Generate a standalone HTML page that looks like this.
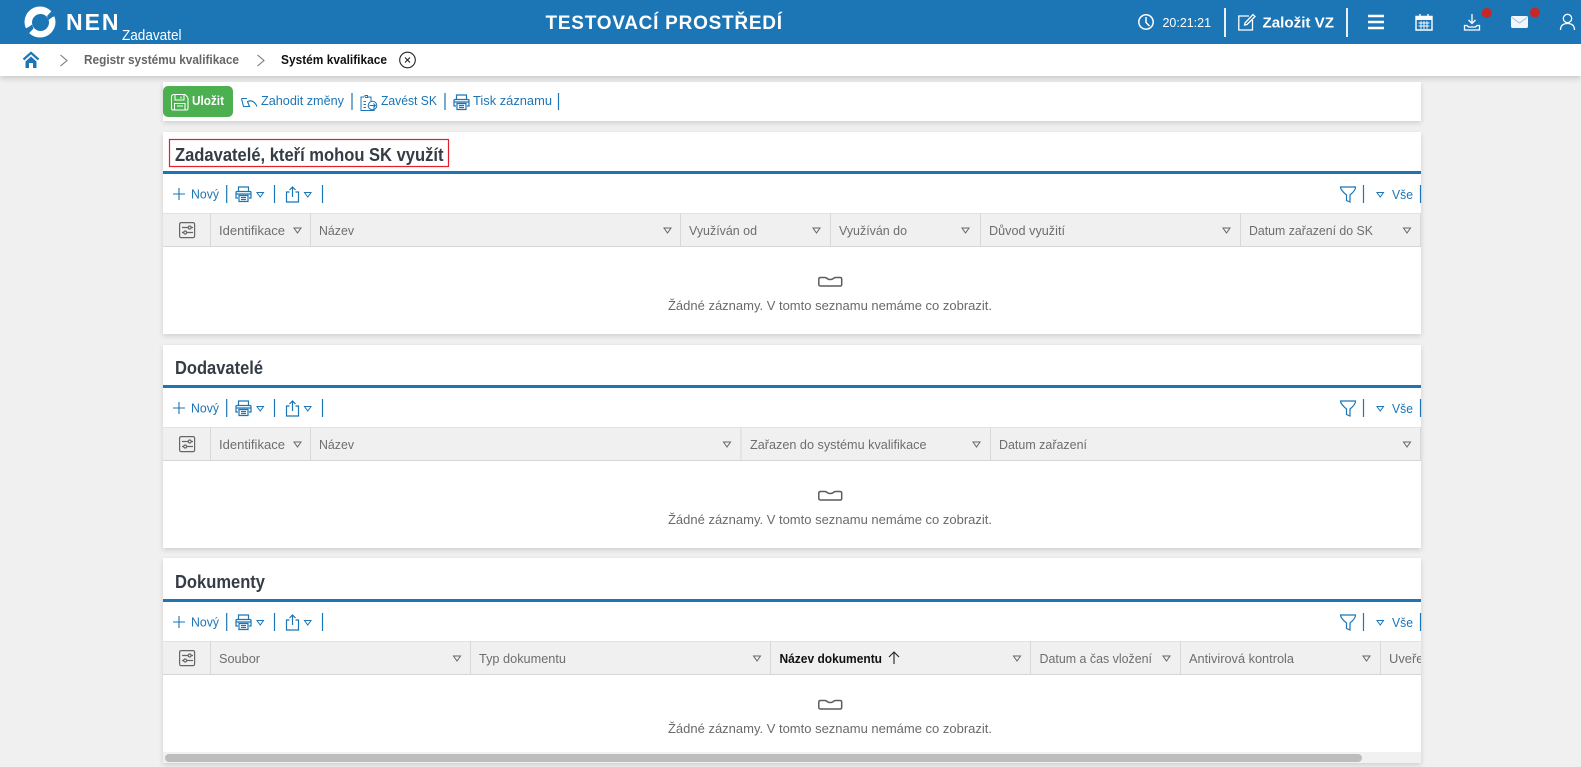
<!DOCTYPE html>
<html lang="cs"><head><meta charset="utf-8"><title>Systém kvalifikace</title>
<style>
html,body{margin:0;padding:0;width:1581px;height:767px;overflow:hidden;background:#f0f0f0}
.p{position:absolute;left:163px;width:1258px;background:#fff;box-shadow:0 2px 5px rgba(0,0,0,.14)}
#top{position:absolute;left:0;top:0;width:1581px;height:76px;background:#fff;box-shadow:0 2px 6px rgba(0,0,0,.18)}
svg{position:absolute;left:0;top:0}
text{font-family:"Liberation Sans",sans-serif;font-size:13px;white-space:pre}
.b{fill:#1c75b5}.g{fill:#6a6a6a}.bd{font-weight:bold}
.h{fill:#6e6e6e}
.t{font-size:18px;font-weight:bold;fill:#353c46}
.sb{fill:none;stroke:#1c75b5;stroke-width:1.2}
.sg{fill:none;stroke:#666;stroke-width:1.2}
.sw{fill:none;stroke:#fff;stroke-width:1.5}
</style></head><body>
<div id="top"></div>
<div class="p" style="top:82px;height:39px"></div>
<div class="p" style="top:132px;height:202px"></div>
<div class="p" style="top:345px;height:203px"></div>
<div class="p" style="top:558px;height:205px"></div>
<svg width="1581" height="767" viewBox="0 0 1581 767" xmlns="http://www.w3.org/2000/svg">
<defs>
<path id="tb" d="M.5 .5H7L3.750 5Z" fill="none" stroke="#1c75b5" stroke-width="1"/>
<path id="tg" d="M0 0H7L3.500 5Z" class="sg" style="stroke-width:1"/>
<g id="printer" class="sb"><path d="M3.500 6V1H13.500V6M3 12H1V6.500Q1 5.500 2 5.500H15Q16 5.500 16 6.500V12H14"/><path d="M4 9.500H13V15.500H4ZM6 11.500H11M6 13.500H11M1 8H16"/></g>
<g id="share" class="sb"><path d="M4 6H1V16H13V6H10M7 11V1M4 4L7 1L10 4"/></g>
<g id="cfg" class="sg"><rect x=".6" y=".6" width="15" height="15" rx="1.500"/><path d="M3 5.500H9M12.500 5.500H14M3 10.500H4.500M8 10.500H14"/><circle cx="10.700" cy="5.500" r="1.500"/><circle cx="6.200" cy="10.500" r="1.500"/></g>
<path id="empty" d="M.8 2.500Q.8 1 2.500 1H6.500Q8.500 1 9.500 2.300Q12 3.800 15 2.300Q16 1 18 1H22Q23.700 1 23.700 2.500V8Q23.700 9.500 22 9.500H2.500Q.8 9.500 .8 8Z" fill="none" stroke="#5c5c5c" stroke-width="1.500"/>
<g id="bar">
<path d="M173 194H185M179 188V200" class="sb" style="stroke-width:1.100"/>
<path d="M226.700 185V203M274.500 185V203M322.500 185V203M1363.500 185V203M1420.500 185V203" class="sb"/>
<use href="#printer" x="235" y="186"/><use href="#tb" x="256.500" y="192"/>
<use href="#share" x="285.500" y="186"/><use href="#tb" x="304" y="192"/>
<path d="M1340.500 187H1355.500Q1356 190 1350 195V202L1346.500 200.500V195Q1340.500 190 1340.500 187Z" class="sb"/>
<use href="#tb" x="1376.500" y="192"/>
<rect x="163" y="213" width="1258" height="34" fill="#f0f0f0"/>
<path d="M163 213.500H1421" stroke="#e3e3e3"/><path d="M163 246.500H1421" stroke="#d6d6d6"/>
<path d="M210.500 213V247" stroke="#d8d8d8"/>
<use href="#cfg" x="179" y="222"/>
</g>
</defs>

<!-- top bar -->
<rect width="1581" height="44" fill="#1c75b5"/>
<circle cx="40" cy="22" r="15.500" fill="#fff"/>
<circle cx="40.500" cy="22.500" r="8.500" fill="#1c75b5"/>
<path d="M47 16Q51 12 55 7L59 15Q53 16 48.500 20Z" fill="#1c75b5"/>
<path d="M47 16Q51 12 55 7L59 15Q53 16 48.500 20Z" fill="#1c75b5" transform="rotate(180 40.250 22.250)"/>
<text x="66" y="30" textLength="52.500" lengthAdjust="spacing" style="font-size:23px;font-weight:bold" fill="#fff">NEN</text>
<text x="122" y="40" textLength="59.500" lengthAdjust="spacingAndGlyphs" style="font-size:14.500px" fill="#fff">Zadavatel</text>
<text x="545.500" y="29" textLength="236.500" lengthAdjust="spacing" style="font-size:19px;font-weight:bold" fill="#fff">TESTOVACÍ PROSTŘEDÍ</text>
<circle cx="1146" cy="22" r="7.200" class="sw"/><path d="M1146 17V22.500L1149.500 26" class="sw"/>
<text x="1162.500" y="27" textLength="48.500" lengthAdjust="spacingAndGlyphs" fill="#fff">20:21:21</text>
<path d="M1225 8V37M1347 8V37" stroke="#fff" stroke-width="1.800"/>
<path d="M1249 16H1238.800V30H1252.500V20M1245 23L1253 14.500L1255 16.500L1247 24.500L1244.500 25Z" class="sw" style="stroke-width:1.300"/>
<text x="1262.500" y="27.500" textLength="71.500" lengthAdjust="spacingAndGlyphs" style="font-size:15px;font-weight:bold" fill="#fff">Založit VZ</text>
<path d="M1368 16H1384M1368 22H1384M1368 28H1384" stroke="#fff" stroke-width="2.400"/>
<path d="M1416 16.500H1432V30H1416ZM1420 14V18M1428 14V18" class="sw" style="stroke-width:1.400"/><rect x="1416" y="16" width="16" height="4" fill="#fff"/><path d="M1418.500 23H1429.500M1418.500 26H1429.500M1421 21V29M1424 21V29M1427 21V29" stroke="#fff" stroke-width=".9"/>
<path d="M1472 14V23M1468.500 20L1472 23.500L1475.500 20M1464.500 25.500H1467L1468.500 27H1475.500L1477 25.500H1479.500V30H1464.500Z" class="sw" style="stroke-width:1.300"/>
<circle cx="1486.700" cy="13" r="5" fill="#c62828"/>
<path d="M1511 17.500Q1511 16 1513 16H1526Q1528 16 1528 17.500V26.500Q1528 28 1526 28H1513Q1511 28 1511 26.500Z" fill="#f2f6fa"/><path d="M1512 17.500L1519.500 23L1527 17.500" fill="none" stroke="#9dc2de" stroke-width="1"/>
<circle cx="1535" cy="12.500" r="5" fill="#c62828"/>
<circle cx="1567.500" cy="18.500" r="4.200" class="sw" style="stroke-width:1.300"/><path d="M1560.500 30Q1560.500 23.500 1567.500 23.500Q1574.500 23.500 1574.500 30" class="sw" style="stroke-width:1.300"/>

<!-- breadcrumb -->
<path d="M23.500 59.500L31 52.800L38.500 59.500" fill="none" stroke="#1c75b5" stroke-width="2.200"/>
<path d="M25.500 61.500L31 56.500L36.500 61.500V68H33V63H29V68H25.500Z" fill="#1c75b5"/>
<path d="M60.500 55L67 60.500L60.500 66M257.500 55L264 60.500L257.500 66" fill="none" stroke="#777" stroke-width="1.100"/>
<text x="84" y="64" textLength="155" lengthAdjust="spacingAndGlyphs" class="bd" style="font-size:12.500px" fill="#666">Registr systému kvalifikace</text>
<text x="281" y="64" textLength="106" lengthAdjust="spacingAndGlyphs" class="bd" style="font-size:12.500px" fill="#111">Systém kvalifikace</text>
<circle cx="407.500" cy="60" r="7.800" fill="none" stroke="#222" stroke-width="1.100"/><path d="M405 57.500L410 62.500M410 57.500L405 62.500" stroke="#222" stroke-width="1.100"/>

<!-- main toolbar -->
<rect x="163" y="86" width="70" height="31" rx="5" fill="#4caf50"/>
<path d="M174 94.500H185Q188 97 188 99V108Q188 110 186.500 110H173Q171.500 110 171.500 108V97Q171.500 94.500 174 94.500ZM175 95V100H184V95M174.500 110V103.500H185V110M177 106H183M181 96.500V98.500" fill="none" stroke="#fff" stroke-width="1.100"/>
<text x="192" y="105" textLength="32" lengthAdjust="spacingAndGlyphs" class="bd" style="font-size:12.500px" fill="#fff">Uložit</text>
<path d="M241.500 98.500H247M241.500 98.500L243.500 106.500H249.500L247.500 101.500Q253.500 99 257 106.500" class="sb" style="stroke-width:1.100"/>
<text x="261" y="105" textLength="83" lengthAdjust="spacingAndGlyphs" class="b">Zahodit změny</text>
<path d="M352 93V110M445 93V110M558.500 93V110" class="sb"/>
<path d="M364 97H361V110.500H374V105M371 102V97H368M365 97V95.500H367.500V97.500H365M363.500 101.500H366M363.500 104.500H366M363.500 107.500H366" class="sb" style="stroke-width:1"/><circle cx="372.500" cy="105.500" r="4.300" class="sb" style="stroke-width:1"/><path d="M369.500 105.500H375M373.500 103.500L375.500 105.500L373.500 107.500" class="sb" style="stroke-width:.9"/>
<text x="381" y="105" textLength="56" lengthAdjust="spacingAndGlyphs" class="b">Zavést SK</text>
<use href="#printer" x="453" y="94"/>
<text x="473" y="105" textLength="79" lengthAdjust="spacingAndGlyphs" class="b">Tisk záznamu</text>

<!-- section 1 -->
<rect x="163" y="171" width="1258" height="3" fill="#1c75b5"/>
<rect x="169.500" y="139.500" width="279" height="27" fill="none" stroke="#e5202e" stroke-width="1.200"/>
<text x="175" y="161" textLength="268.500" lengthAdjust="spacingAndGlyphs" class="t">Zadavatelé, kteří mohou SK využít</text>
<use href="#bar"/>
<text x="191" y="198.500" textLength="28" lengthAdjust="spacingAndGlyphs" class="b">Nový</text>
<text x="1392" y="199" textLength="21" lengthAdjust="spacingAndGlyphs" class="b">Vše</text>
<path d="M310.500 213V247M680.500 213V247M830.500 213V247M980.500 213V247M1240.500 213V247M1420.500 213V247" stroke="#d8d8d8"/>
<text x="219" y="235" textLength="66" lengthAdjust="spacingAndGlyphs" class="h">Identifikace</text><use href="#tg" x="294" y="228"/>
<text x="319" y="235" textLength="35" lengthAdjust="spacingAndGlyphs" class="h">Název</text><use href="#tg" x="664" y="228"/>
<text x="689" y="235" textLength="68" lengthAdjust="spacingAndGlyphs" class="h">Využíván od</text><use href="#tg" x="813" y="228"/>
<text x="839" y="235" textLength="68" lengthAdjust="spacingAndGlyphs" class="h">Využíván do</text><use href="#tg" x="962" y="228"/>
<text x="989" y="235" textLength="76" lengthAdjust="spacingAndGlyphs" class="h">Důvod využití</text><use href="#tg" x="1223" y="228"/>
<text x="1249" y="235" textLength="124" lengthAdjust="spacingAndGlyphs" class="h">Datum zařazení do SK</text><use href="#tg" x="1403.500" y="228"/>
<use href="#empty" x="818" y="276.500"/>
<text x="668" y="310" textLength="324" lengthAdjust="spacingAndGlyphs" class="g">Žádné záznamy. V tomto seznamu nemáme co zobrazit.</text>

<!-- section 2 -->
<rect x="163" y="385" width="1258" height="3" fill="#1c75b5"/>
<text x="175" y="374" textLength="88" lengthAdjust="spacingAndGlyphs" class="t">Dodavatelé</text>
<use href="#bar" y="214"/>
<text x="191" y="412.500" textLength="28" lengthAdjust="spacingAndGlyphs" class="b">Nový</text>
<text x="1392" y="413" textLength="21" lengthAdjust="spacingAndGlyphs" class="b">Vše</text>
<path d="M310.500 427V461M741 427V461M990.500 427V461M1420.500 427V461" stroke="#d8d8d8"/>
<text x="219" y="449" textLength="66" lengthAdjust="spacingAndGlyphs" class="h">Identifikace</text><use href="#tg" x="294" y="442"/>
<text x="319" y="449" textLength="35" lengthAdjust="spacingAndGlyphs" class="h">Název</text><use href="#tg" x="723.500" y="442"/>
<text x="750" y="449" textLength="176.500" lengthAdjust="spacingAndGlyphs" class="h">Zařazen do systému kvalifikace</text><use href="#tg" x="973" y="442"/>
<text x="999" y="449" textLength="88" lengthAdjust="spacingAndGlyphs" class="h">Datum zařazení</text><use href="#tg" x="1403.500" y="442"/>
<use href="#empty" x="818" y="490.500"/>
<text x="668" y="524" textLength="324" lengthAdjust="spacingAndGlyphs" class="g">Žádné záznamy. V tomto seznamu nemáme co zobrazit.</text>

<!-- section 3 -->
<rect x="163" y="599" width="1258" height="3" fill="#1c75b5"/>
<text x="175" y="588" textLength="90" lengthAdjust="spacingAndGlyphs" class="t">Dokumenty</text>
<use href="#bar" y="428"/>
<text x="191" y="626.500" textLength="28" lengthAdjust="spacingAndGlyphs" class="b">Nový</text>
<text x="1392" y="627" textLength="21" lengthAdjust="spacingAndGlyphs" class="b">Vše</text>
<path d="M470.500 641V675M770.500 641V675M1030.500 641V675M1180.500 641V675M1380.500 641V675" stroke="#d8d8d8"/>
<text x="219" y="663" textLength="41" lengthAdjust="spacingAndGlyphs" class="h">Soubor</text><use href="#tg" x="453.500" y="656"/>
<text x="479" y="663" textLength="87" lengthAdjust="spacingAndGlyphs" class="h">Typ dokumentu</text><use href="#tg" x="753.500" y="656"/>
<text x="779.500" y="663" textLength="102.500" lengthAdjust="spacingAndGlyphs" class="bd" fill="#111">Název dokumentu</text>
<path d="M894 664V652M889 657L894 652L899 657" fill="none" stroke="#222" stroke-width="1.100"/><use href="#tg" x="1013.500" y="656"/>
<text x="1039.500" y="663" textLength="112.500" lengthAdjust="spacingAndGlyphs" class="h">Datum a čas vložení</text><use href="#tg" x="1163" y="656"/>
<text x="1189" y="663" textLength="105" lengthAdjust="spacingAndGlyphs" class="h">Antivirová kontrola</text><use href="#tg" x="1363" y="656"/>
<svg x="1381" y="641" width="40" height="34"><text x="8" y="22" textLength="66" lengthAdjust="spacingAndGlyphs" class="h">Uveřejněno</text></svg>
<use href="#empty" x="818" y="699.500"/>
<text x="668" y="733" textLength="324" lengthAdjust="spacingAndGlyphs" class="g">Žádné záznamy. V tomto seznamu nemáme co zobrazit.</text>
<rect x="163" y="752" width="1258" height="11" fill="#f1f1f1"/>
<rect x="165" y="754" width="1197" height="8" rx="4" fill="#bdbdbd"/>
</svg>
</body></html>
